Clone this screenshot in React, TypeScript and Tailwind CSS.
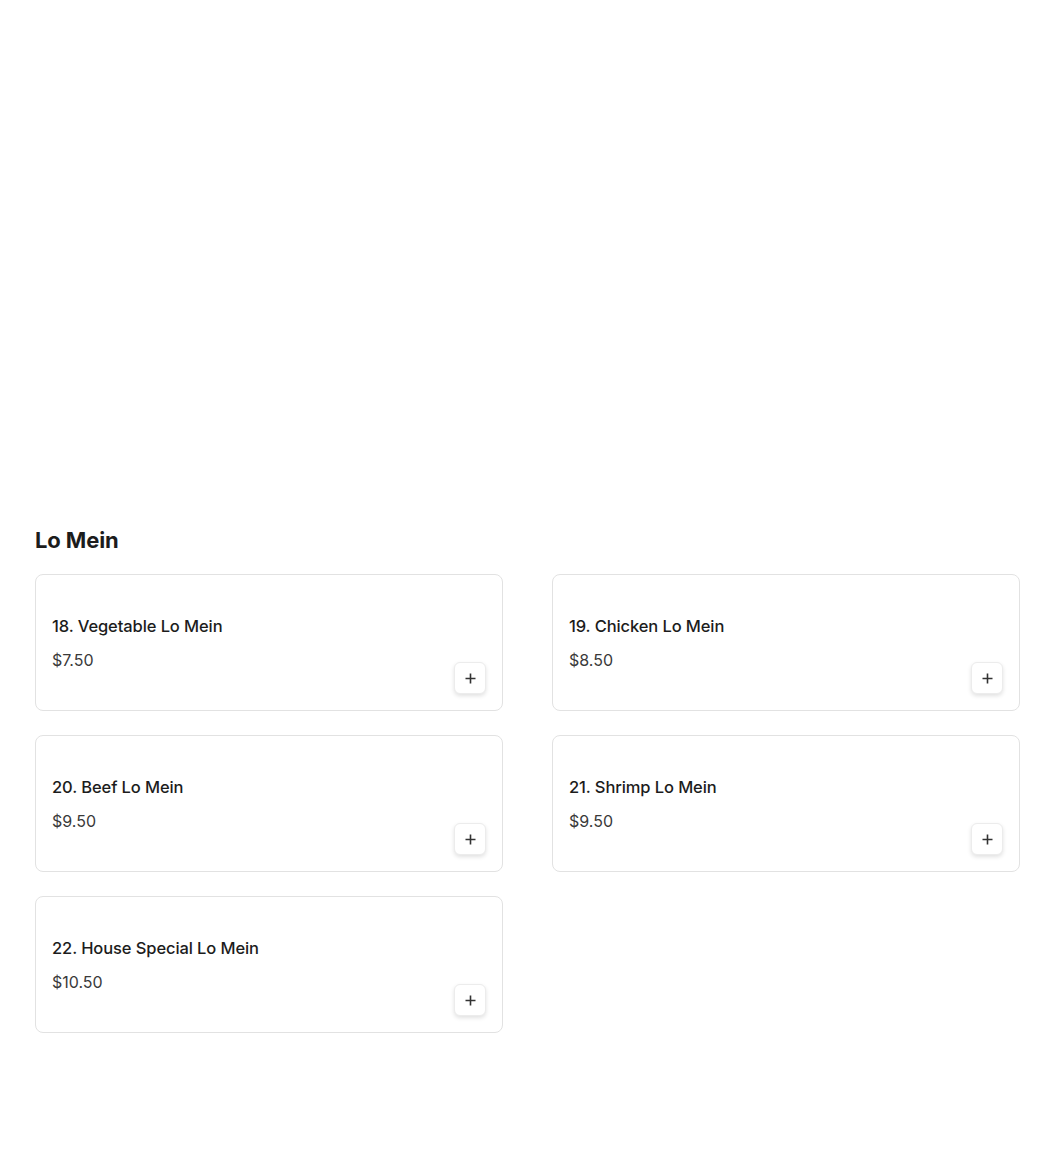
import React from "react";

const items = [
  { name: "18. Vegetable Lo Mein", price: "$7.50" },
  { name: "19. Chicken Lo Mein", price: "$8.50" },
  { name: "20. Beef Lo Mein", price: "$9.50" },
  { name: "21. Shrimp Lo Mein", price: "$9.50" },
  { name: "22. House Special Lo Mein", price: "$10.50" },
];

export default function App() {
  return (
    <div className="min-h-[1151px] bg-white pt-[524px] pl-[35px] pr-[30px] text-[#1c1c1c]" style={{ fontFamily: "Inter, 'Noto Sans', sans-serif" }}>
      <h2 className="text-[22px] leading-[32px] font-bold tracking-[-0.1px] mb-[18px]">Lo Mein</h2>
      <div className="grid grid-cols-2 gap-x-[49px] gap-y-[24px]">
        {items.map((it) => (
          <div key={it.name} className="h-[137px] rounded-lg border border-[#e2e2e2] p-4 flex justify-between">
            <div className="flex flex-col justify-center">
              <div className="text-[16.5px] leading-6 font-medium text-[#1c1c1c] tracking-[-0.1px]">{it.name}</div>
              <div className="mt-[10px] text-[16px] leading-6 text-[#3a3a3a]">{it.price}</div>
            </div>
            <button className="self-end w-8 h-8 rounded-md bg-white border border-[#ececec] shadow-[0_2px_4px_rgba(0,0,0,0.12)] flex items-center justify-center">
              <svg width="11" height="11" viewBox="0 0 11 11" fill="none" stroke="#333" strokeWidth="1.6">
                <path d="M5.5 0.5v10M0.5 5.5h10" />
              </svg>
            </button>
          </div>
        ))}
      </div>
    </div>
  );
}
